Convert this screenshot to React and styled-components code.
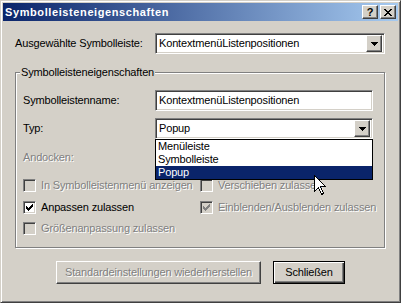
import React from 'react';
import styled, { createGlobalStyle, css } from 'styled-components';

const Global = createGlobalStyle`
  html, body { margin: 0; padding: 0; background: #D4D0C8; }
  body {
    font-family: "Liberation Sans", Arial, sans-serif;
    font-size: 11px;
    color: #000;
  }
`;

const FACE = '#D4D0C8';
const SHADOW = '#808080';
const DARK = '#404040';

const sunken = css`
  box-sizing: border-box;
  border: 1px solid;
  border-color: ${SHADOW} #fff #fff ${SHADOW};
  box-shadow: inset 1px 1px 0 ${DARK}, inset -1px -1px 0 ${FACE};
`;

const raised = css`
  box-sizing: border-box;
  border: 1px solid;
  border-color: #fff ${DARK} ${DARK} #fff;
  box-shadow: inset -1px -1px 0 ${SHADOW};
  background: ${FACE};
`;

const disabledText = css`
  color: ${SHADOW};
  text-shadow: 1px 1px 0 #fff;
`;

const Window = styled.div`
  box-sizing: border-box;
  position: relative;
  width: 401px;
  height: 303px;
  background: ${FACE};
  border: 1px solid;
  border-color: ${FACE} ${DARK} ${DARK} ${FACE};
  box-shadow: inset 1px 1px 0 #fff, inset -1px -1px 0 ${SHADOW};
  padding: 2px;
  display: flex;
  flex-direction: column;
  letter-spacing: -0.15px;
`;

const TitleBar = styled.div`
  height: 18px;
  flex: none;
  display: flex;
  align-items: center;
  padding: 0 2px;
  background: linear-gradient(to right, #0A246A, #A6CAF0);
`;

const TitleText = styled.span`
  color: #fff;
  font-weight: bold;
  font-size: 11px;
  letter-spacing: 0.6px;
  line-height: 13px;
`;

const CaptionButtons = styled.div`
  margin-left: auto;
  display: flex;
  gap: 2px;
`;

const CaptionButton = styled.div`
  ${raised}
  width: 16px;
  height: 14px;
  display: flex;
  align-items: center;
  justify-content: center;
  font-weight: bold;
  font-size: 11px;
  line-height: 11px;
  letter-spacing: 0;
  color: #000;
`;

const Content = styled.div`
  display: flex;
  flex-direction: column;
  padding: 12px 13px 0 12px;
`;

const Row = styled.div`
  display: flex;
  align-items: center;
  height: 21px;
  margin-top: ${p => p.$mt || 0}px;
`;

const Label = styled.span`
  width: ${p => p.$w}px;
  flex: none;
  line-height: 13px;
  ${p => p.$disabled && disabledText}
`;

const Field = styled.div`
  ${sunken}
  position: relative;
  width: ${p => p.$w}px;
  height: 21px;
  background: #fff;
  display: flex;
  align-items: center;
  padding: 2px 2px 2px 3px;
  line-height: 13px;
`;

const FieldText = styled.span`
  flex: 1;
  white-space: nowrap;
  overflow: hidden;
`;

const DropButton = styled.div`
  ${raised}
  width: 16px;
  height: 17px;
  flex: none;
  display: flex;
  align-items: center;
  justify-content: center;
`;

const List = styled.div`
  position: absolute;
  left: -1px;
  top: 20px;
  width: 218px;
  box-sizing: border-box;
  border: 1px solid #000;
  background: #fff;
  z-index: 2;
`;

const ListItem = styled.div`
  height: 13px;
  line-height: 13px;
  padding-left: 2px;
  white-space: nowrap;
  background: ${p => (p.$selected ? '#0A246A' : 'transparent')};
  color: ${p => (p.$selected ? '#fff' : '#000')};
`;

const Group = styled.fieldset`
  margin: 12px 0 0 0;
  padding: 11px 11px 12px 7px;
  min-width: 0;
  border: 1px solid ${SHADOW};
  box-shadow: 1px 1px 0 #fff, inset 1px 1px 0 #fff;
  display: flex;
  flex-direction: column;
`;

const Legend = styled.legend`
  padding: 0 1px;
  margin-left: -3px;
  line-height: 13px;
  background: ${FACE};
`;

const DisabledLine = styled.div`
  margin-top: 12px;
  line-height: 13px;
  height: 13px;
  ${disabledText}
`;

const CheckGrid = styled.div`
  display: grid;
  grid-template-columns: 177px 1fr;
  grid-template-rows: 13px 13px 13px;
  row-gap: 8.5px;
  margin-top: 15px;
`;

const CheckItem = styled.label`
  display: flex;
  align-items: center;
  gap: 5px;
  height: 13px;
  line-height: 13px;
  white-space: nowrap;
  ${p => p.$disabled && disabledText}
`;

const Box = styled.span`
  ${sunken}
  width: 13px;
  height: 13px;
  flex: none;
  display: flex;
  align-items: center;
  justify-content: center;
  background: ${p => (p.$disabled ? FACE : '#fff')};
`;

const ButtonRow = styled.div`
  display: flex;
  justify-content: center;
  gap: 12px;
  margin-top: 13px;
  margin-left: -12px;
  margin-right: -13px;
`;

const PushButton = styled.div`
  box-sizing: border-box;
  width: ${p => p.$w}px;
  height: 23px;
  display: flex;
  align-items: center;
  justify-content: center;
  background: ${FACE};
  line-height: 13px;
  ${p =>
    p.$default
      ? css`
          border: 1px solid #000;
          box-shadow: inset 1px 1px 0 #fff, inset -1px -1px 0 ${DARK}, inset -2px -2px 0 ${SHADOW};
        `
      : css`
          border: 1px solid;
          border-color: #fff ${DARK} ${DARK} #fff;
          box-shadow: inset -1px -1px 0 ${SHADOW};
        `}
  ${p => p.$disabled && disabledText}
`;

const Cursor = styled.svg`
  position: absolute;
  left: 313px;
  top: 174px;
  z-index: 5;
`;

const Arrow = ({ color = '#000' }) => (
  <svg width="7" height="4" viewBox="0 0 7 4" shapeRendering="crispEdges">
    <path d="M0 0h7v1h-7z M1 1h5v1h-5z M2 2h3v1h-3z M3 3h1v1h-1z" fill={color} />
  </svg>
);

const CloseGlyph = () => (
  <svg width="8" height="7" viewBox="0 0 8 7" shapeRendering="crispEdges">
    <path
      d="M0 0h2v1h-2z M6 0h2v1h-2z M1 1h2v1h-2z M5 1h2v1h-2z M2 2h4v1h-4z M3 3h2v1h-2z M2 4h4v1h-4z M1 5h2v1h-2z M5 5h2v1h-2z M0 6h2v1h-2z M6 6h2v1h-2z"
      fill="#000"
    />
  </svg>
);

const Check = ({ color }) => (
  <svg width="7" height="7" viewBox="0 0 7 7" shapeRendering="crispEdges">
    <path
      d="M6 0h1v1h-1z M5 1h2v1h-2z M0 2h1v1h-1z M4 2h3v1h-3z M0 3h2v1h-2z M3 3h3v1h-3z M0 4h5v1h-5z M1 5h3v1h-3z M2 6h1v1h-1z"
      fill={color}
    />
  </svg>
);

const CheckBox = ({ checked, disabled, children }) => (
  <CheckItem $disabled={disabled}>
    <Box $disabled={disabled}>{checked && <Check color={disabled ? SHADOW : '#000'} />}</Box>
    <span>{children}</span>
  </CheckItem>
);

export default function App() {
  return (
    <>
      <Global />
      <Window>
        <TitleBar>
          <TitleText>Symbolleisteneigenschaften</TitleText>
          <CaptionButtons>
            <CaptionButton>?</CaptionButton>
            <CaptionButton>
              <CloseGlyph />
            </CaptionButton>
          </CaptionButtons>
        </TitleBar>
        <Content>
          <Row>
            <Label $w={140}>Ausgewählte Symbolleiste:</Label>
            <Field $w={230}>
              <FieldText>KontextmenüListenpositionen</FieldText>
              <DropButton>
                <Arrow />
              </DropButton>
            </Field>
          </Row>
          <Group>
            <Legend>Symbolleisteneigenschaften</Legend>
            <Row>
              <Label $w={132}>Symbolleistenname:</Label>
              <Field $w={218}>
                <FieldText>KontextmenüListenpositionen</FieldText>
              </Field>
            </Row>
            <Row $mt={7}>
              <Label $w={132}>Typ:</Label>
              <Field $w={218}>
                <FieldText>Popup</FieldText>
                <DropButton>
                  <Arrow />
                </DropButton>
                <List>
                  <ListItem>Menüleiste</ListItem>
                  <ListItem>Symbolleiste</ListItem>
                  <ListItem $selected>Popup</ListItem>
                </List>
              </Field>
            </Row>
            <DisabledLine>Andocken:</DisabledLine>
            <CheckGrid>
              <CheckBox disabled>In Symbolleistenmenü anzeigen</CheckBox>
              <CheckBox disabled>Verschieben zulassen</CheckBox>
              <CheckBox checked>Anpassen zulassen</CheckBox>
              <CheckBox checked disabled>Einblenden/Ausblenden zulassen</CheckBox>
              <CheckBox disabled>Größenanpassung zulassen</CheckBox>
            </CheckGrid>
          </Group>
          <ButtonRow>
            <PushButton $w={205} $disabled>Standardeinstellungen wiederherstellen</PushButton>
            <PushButton $w={72} $default>Schließen</PushButton>
          </ButtonRow>
        </Content>
        <Cursor width="12" height="20" viewBox="0 0 12 20" shapeRendering="crispEdges">
          <path
            d="M0.5 0.5 V16.5 L4.5 12.5 L7.5 19.5 L9.5 18.5 L6.5 11.5 H11.5 Z"
            fill="#fff"
            stroke="#000"
            strokeWidth="1"
            strokeLinejoin="miter"
          />
        </Cursor>
      </Window>
    </>
  );
}
